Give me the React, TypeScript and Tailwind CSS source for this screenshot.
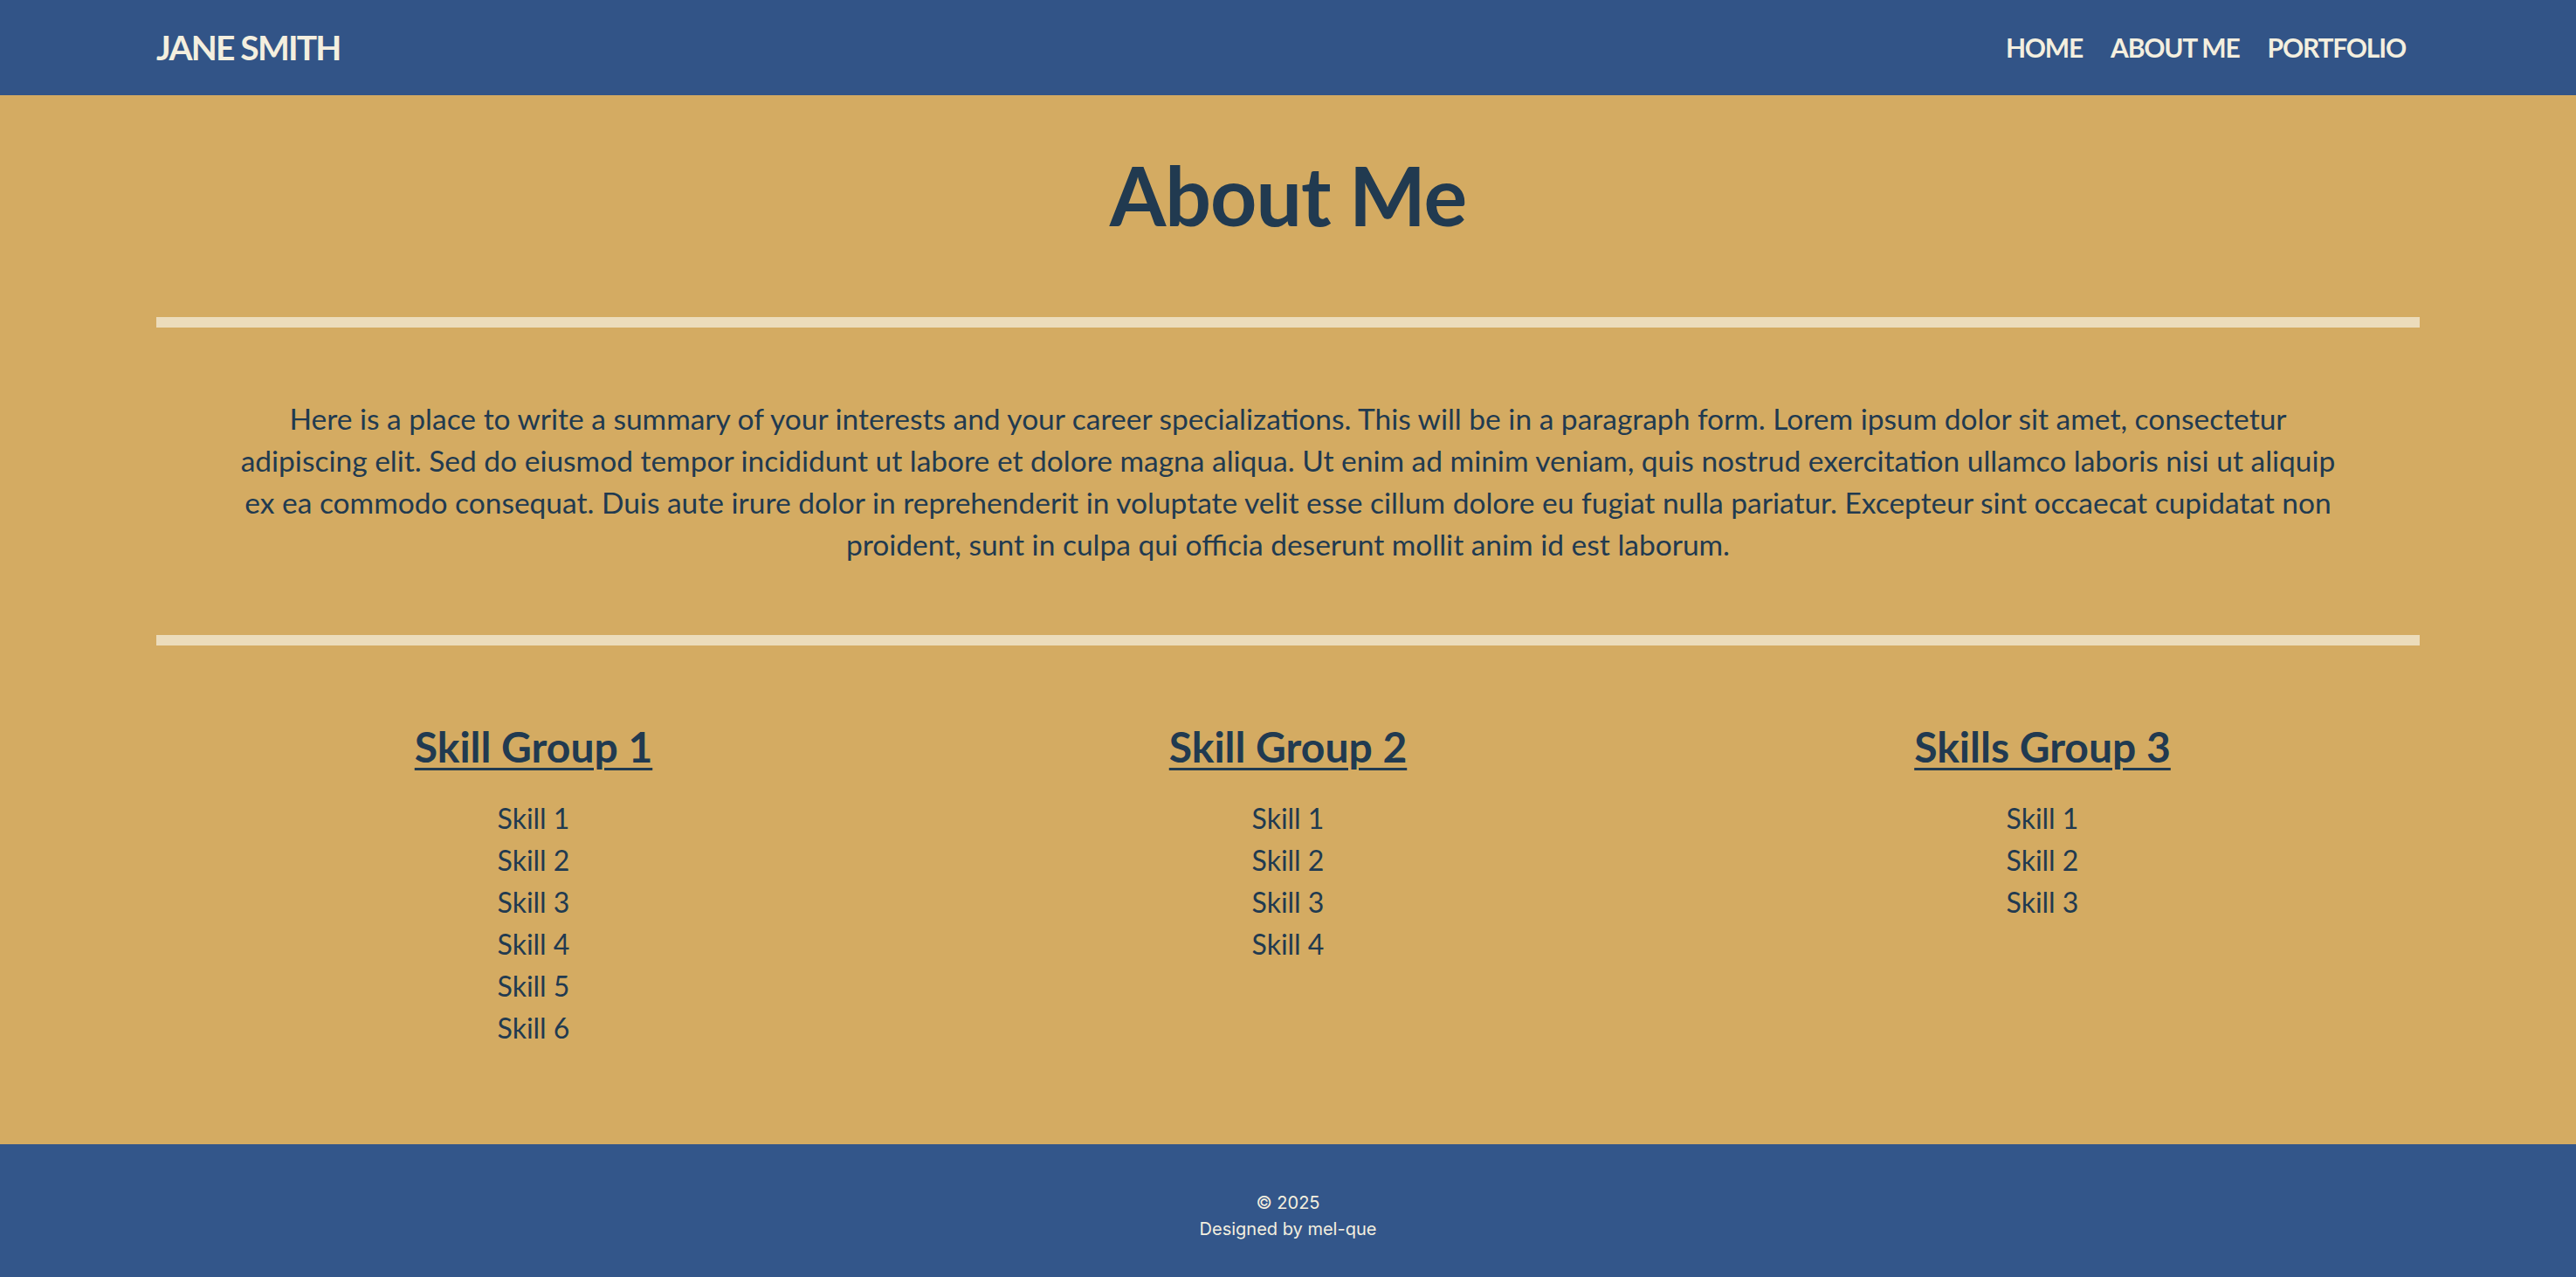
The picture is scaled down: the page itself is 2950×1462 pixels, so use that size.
import React from "react";

const skillGroups = [
  { title: "Skill Group 1", skills: ["Skill 1", "Skill 2", "Skill 3", "Skill 4", "Skill 5", "Skill 6"] },
  { title: "Skill Group 2", skills: ["Skill 1", "Skill 2", "Skill 3", "Skill 4"] },
  { title: "Skills Group 3", skills: ["Skill 1", "Skill 2", "Skill 3"] },
];

const navLinks = ["HOME", "ABOUT ME", "PORTFOLIO"];

const App: React.FC = () => {
  return (
    <div className="min-h-screen flex flex-col bg-[#d4ab62] font-['Lato',sans-serif] text-[#213a50]">
      <header className="bg-[#325487]">
        <div className="max-w-[2592px] mx-auto h-[109px] flex items-center justify-between">
          <a href="#" className="text-[39px] font-bold text-[#f4efdf] tracking-[-1.8px]">
            JANE SMITH
          </a>
          <nav className="flex">
            {navLinks.map((link) => (
              <a key={link} href="#" className="px-[16px] text-[30px] font-bold text-[#f4efdf] tracking-[-1.2px]">
                {link}
              </a>
            ))}
          </nav>
        </div>
      </header>

      <main className="flex-1">
        <div className="max-w-[2592px] mx-auto">
          <h1 className="text-center text-[93px] font-bold leading-[1.2] tracking-[-1px] mt-[59px] mb-[83px]">About Me</h1>
          <hr className="h-[12px] border-0 bg-[#ecdcbb]" />
          <p className="mx-auto max-w-[2432px] my-[80px] text-center text-[33.5px] leading-[48px]">
            Here is a place to write a summary of your interests and your career specializations. This will be in a
            paragraph form. Lorem ipsum dolor sit amet, consectetur adipiscing elit. Sed do eiusmod tempor incididunt ut
            labore et dolore magna aliqua. Ut enim ad minim veniam, quis nostrud exercitation ullamco laboris nisi ut
            aliquip ex ea commodo consequat. Duis aute irure dolor in reprehenderit in voluptate velit esse cillum dolore
            eu fugiat nulla pariatur. Excepteur sint occaecat cupidatat non proident, sunt in culpa qui officia deserunt
            mollit anim id est laborum.
          </p>
          <hr className="h-[12px] border-0 bg-[#ecdcbb]" />

          <section className="grid grid-cols-3 pt-[85px] pb-[100px]">
            {skillGroups.map((group) => (
              <div key={group.title} className="flex flex-col items-center">
                <h2 className="text-[48px] font-bold leading-[62px] underline decoration-[3px] underline-offset-[6px]">
                  {group.title}
                </h2>
                <ul className="mt-[27px] text-center text-[32px] leading-[48px]">
                  {group.skills.map((skill) => (
                    <li key={skill}>{skill}</li>
                  ))}
                </ul>
              </div>
            ))}
          </section>
        </div>
      </main>

      <footer className="bg-[#33568a] h-[152px] pt-[12px] flex flex-col items-center justify-center font-['Inter',sans-serif] text-[20px] leading-[30px] text-[#f4efdf]">
        <p>© 2025</p>
        <p>Designed by mel-que</p>
      </footer>
    </div>
  );
};

export default App;
